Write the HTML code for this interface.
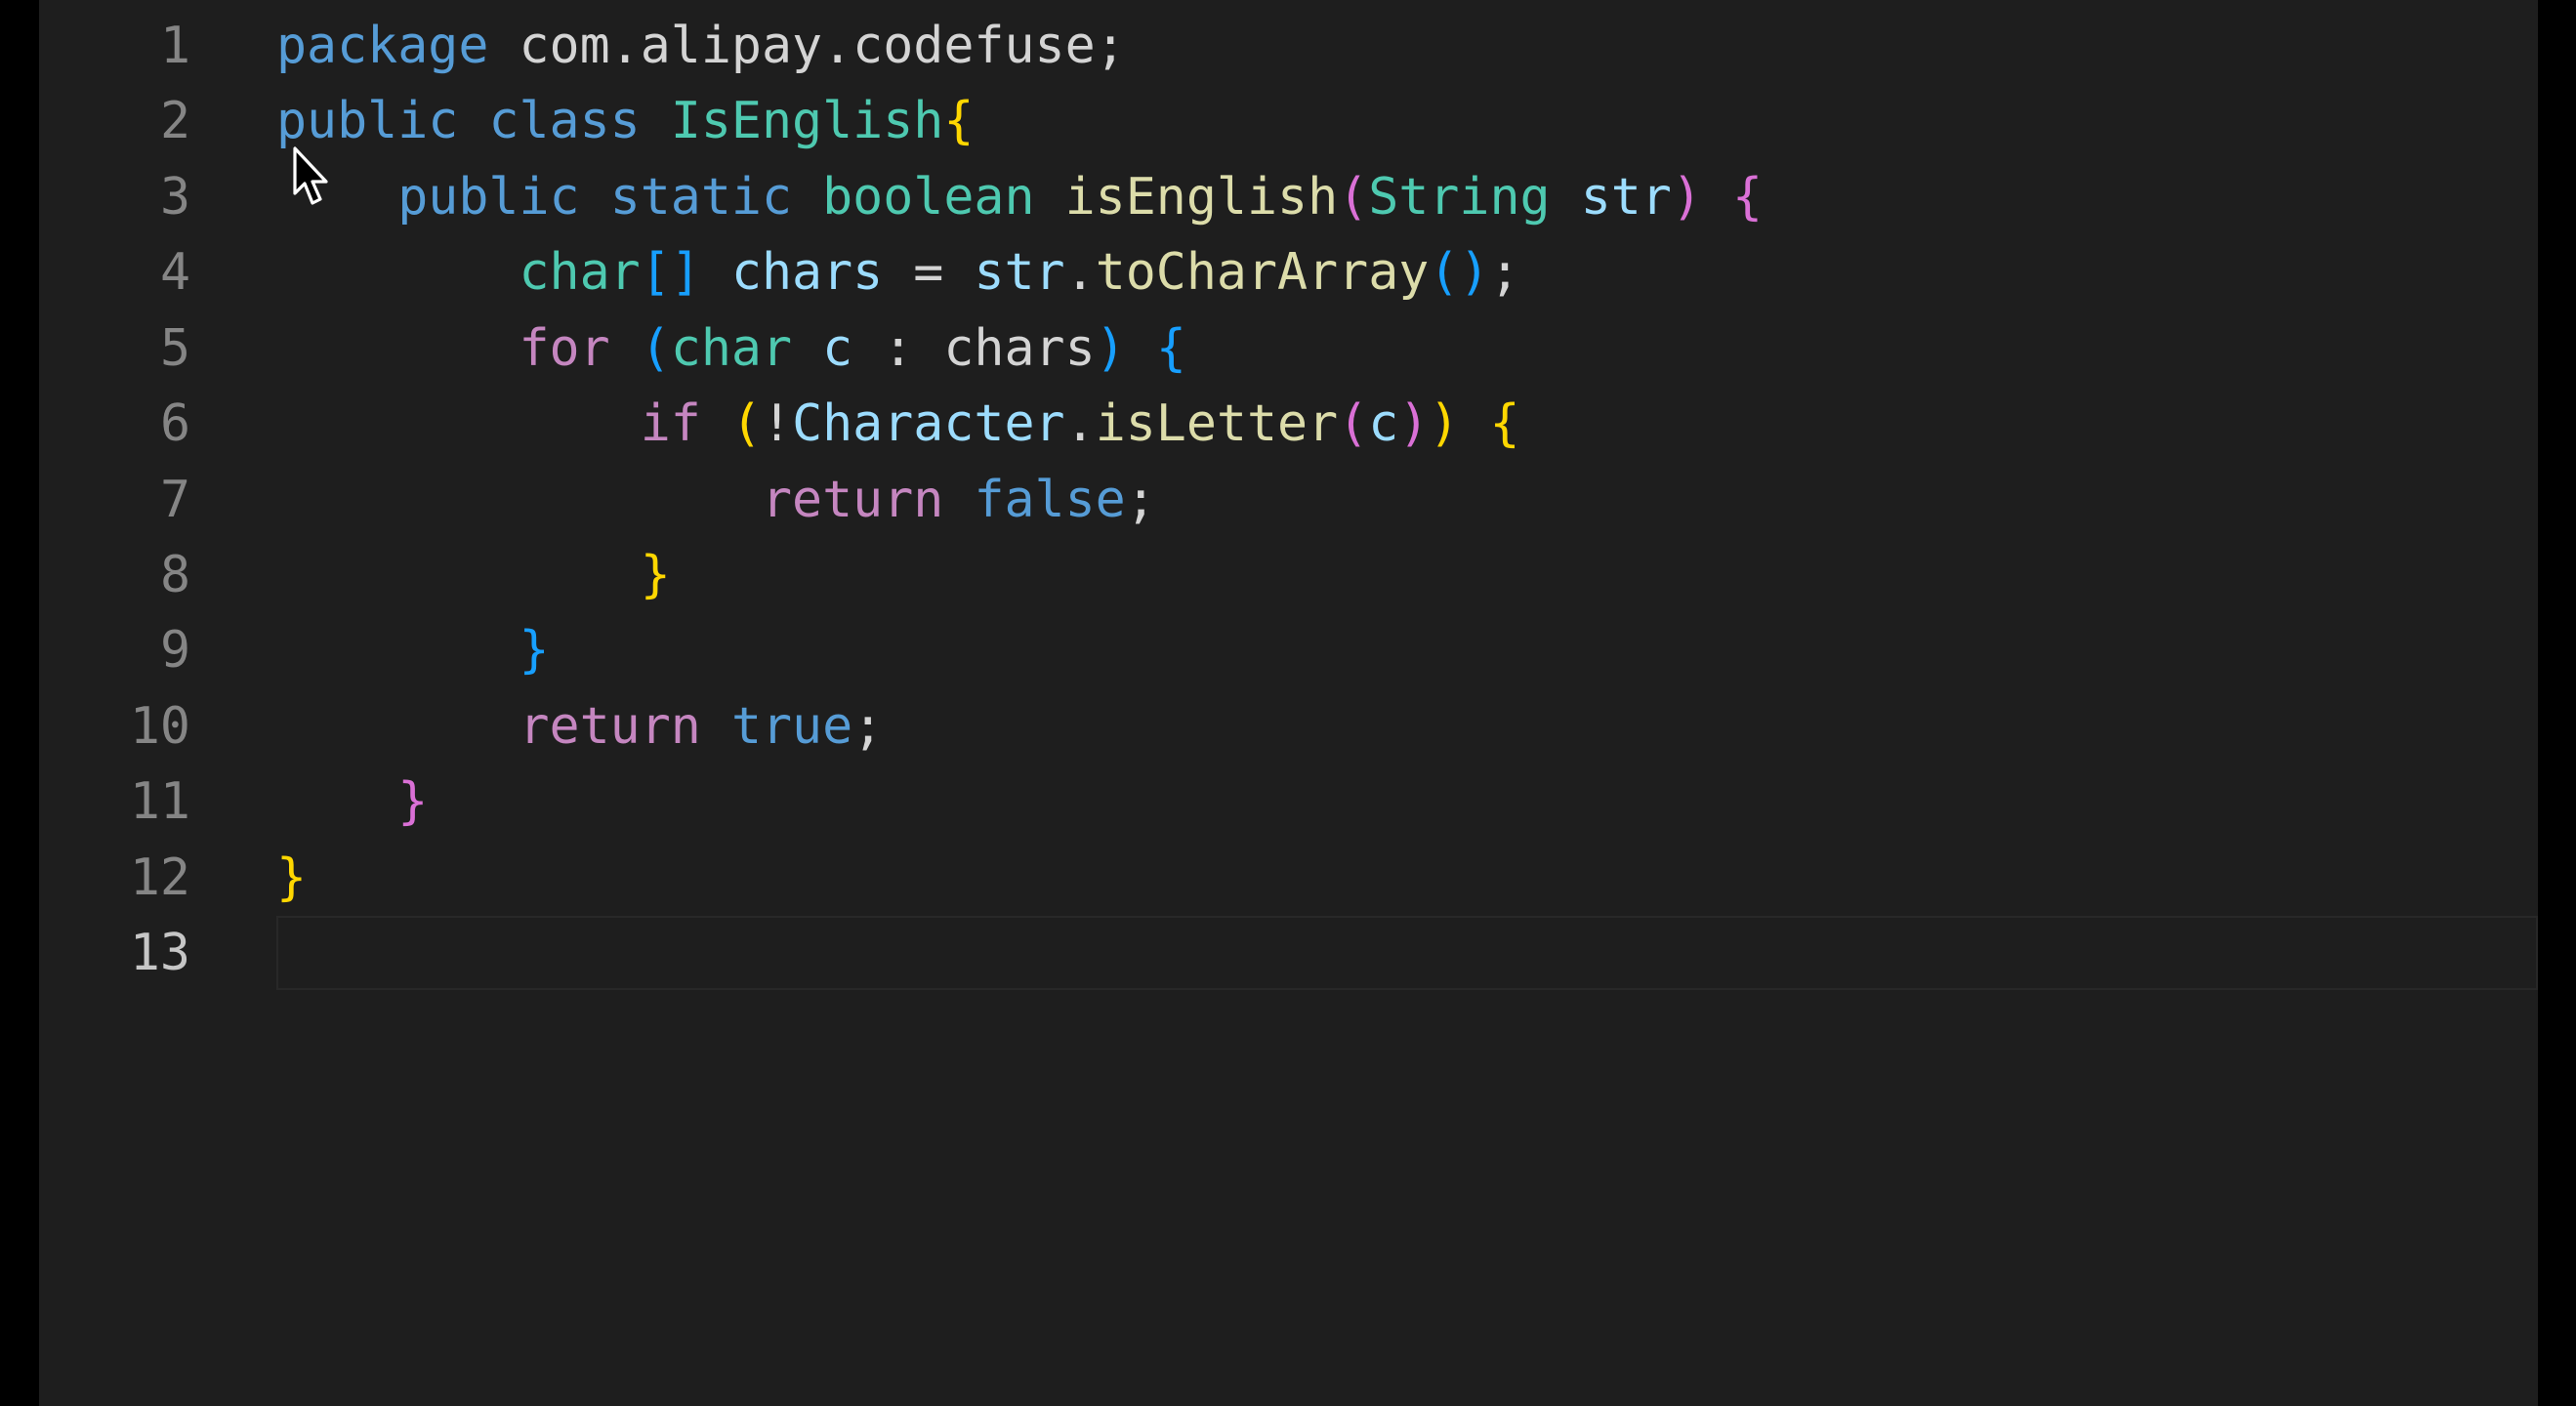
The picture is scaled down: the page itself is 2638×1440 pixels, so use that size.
<!DOCTYPE html>
<html><head><meta charset="utf-8"><style>
html,body{margin:0;padding:0;background:#000;}
body{width:2638px;height:1440px;position:relative;overflow:hidden;}
#ed{position:absolute;left:40px;top:0;width:2559px;height:1440px;background:#1e1e1e;}
.ln{position:absolute;left:40px;width:155px;text-align:right;color:#858585;}
.cl{position:absolute;left:283px;white-space:pre;color:#d4d4d4;}
.ln,.cl{font-family:"DejaVu Sans Mono","Liberation Mono",monospace;font-size:51.6px;height:77px;line-height:77px;}
.k{color:#569cd6}.c{color:#c586c0}.t{color:#4ec9b0}.f{color:#dcdcaa}.v{color:#9cdcfe}
.g{color:#ffd700}.p{color:#da70d6}.b{color:#179fff}
#cur{position:absolute;left:283px;top:938px;width:2312px;height:72px;border:2px solid #282828;}
</style></head><body>
<div id="ed"></div>
<div id="cur"></div>
<div class="ln" style="top:9px">1</div><div class="cl" style="top:9px"><span class="k">package</span> com.alipay.codefuse;</div>
<div class="ln" style="top:86px">2</div><div class="cl" style="top:86px"><span class="k">public</span> <span class="k">class</span> <span class="t">IsEnglish</span><span class="g">{</span></div>
<div class="ln" style="top:164px">3</div><div class="cl" style="top:164px">    <span class="k">public</span> <span class="k">static</span> <span class="t">boolean</span> <span class="f">isEnglish</span><span class="p">(</span><span class="t">String</span> <span class="v">str</span><span class="p">)</span> <span class="p">{</span></div>
<div class="ln" style="top:241px">4</div><div class="cl" style="top:241px">        <span class="t">char</span><span class="b">[]</span> <span class="v">chars</span> = <span class="v">str</span>.<span class="f">toCharArray</span><span class="b">()</span>;</div>
<div class="ln" style="top:319px">5</div><div class="cl" style="top:319px">        <span class="c">for</span> <span class="b">(</span><span class="t">char</span> <span class="v">c</span> : chars<span class="b">)</span> <span class="b">{</span></div>
<div class="ln" style="top:396px">6</div><div class="cl" style="top:396px">            <span class="c">if</span> <span class="g">(</span>!<span class="v">Character</span>.<span class="f">isLetter</span><span class="p">(</span><span class="v">c</span><span class="p">)</span><span class="g">)</span> <span class="g">{</span></div>
<div class="ln" style="top:474px">7</div><div class="cl" style="top:474px">                <span class="c">return</span> <span class="k">false</span>;</div>
<div class="ln" style="top:551px">8</div><div class="cl" style="top:551px">            <span class="g">}</span></div>
<div class="ln" style="top:628px">9</div><div class="cl" style="top:628px">        <span class="b">}</span></div>
<div class="ln" style="top:706px">10</div><div class="cl" style="top:706px">        <span class="c">return</span> <span class="k">true</span>;</div>
<div class="ln" style="top:783px">11</div><div class="cl" style="top:783px">    <span class="p">}</span></div>
<div class="ln" style="top:861px">12</div><div class="cl" style="top:861px"><span class="g">}</span></div>
<div class="ln" style="top:938px;color:#c6c6c6">13</div>
<svg style="position:absolute;left:300px;top:150px" width="44" height="62" viewBox="0 0 22 31"><path d="M1 1 L1 24 L6 19 L10 29 L14 27 L10 18 L17 18 Z" fill="#000" stroke="#fff" stroke-width="1.6" stroke-linejoin="round"/></svg>
</body></html>
